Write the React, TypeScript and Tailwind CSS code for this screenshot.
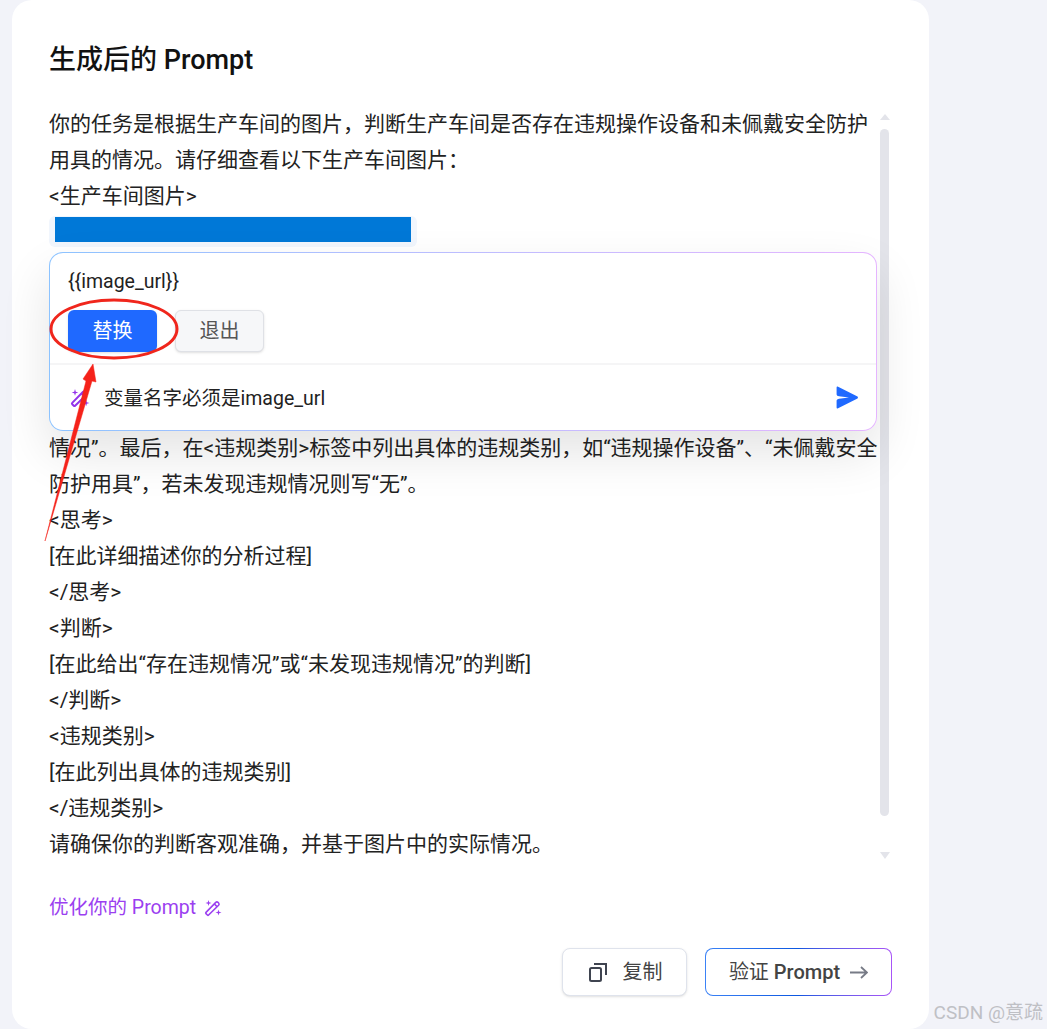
const font = "font-['Roboto','Noto_Sans_CJK_SC',sans-serif]"

const topLines = [
  '你的任务是根据生产车间的图片，判断生产车间是否存在违规操作设备和未佩戴安全防护',
  '用具的情况。请仔细查看以下生产车间图片：',
  '<生产车间图片>',
]

const bottomLines = [
  '情况”。最后，在<违规类别>标签中列出具体的违规类别，如“违规操作设备”、“未佩戴安全',
  '防护用具”，若未发现违规情况则写“无”。',
  '<思考>',
  '[在此详细描述你的分析过程]',
  '</思考>',
  '<判断>',
  '[在此给出“存在违规情况”或“未发现违规情况”的判断]',
  '</判断>',
  '<违规类别>',
  '[在此列出具体的违规类别]',
  '</违规类别>',
  '请确保你的判断客观准确，并基于图片中的实际情况。',
]

function SendIcon() {
  return (
    <svg width="22" height="23" viewBox="0 0 22 23" className="shrink-0">
      <path d="M1.6 0.6 L21.5 10.4 Q22.4 11.5 21.5 12.6 L1.6 22.4 Q0.6 22.6 0.6 21.4 L0.6 14.6 Q0.6 13 3 12.7 L13 11.5 L3 10.3 Q0.6 10 0.6 8.4 L0.6 1.6 Q0.6 0.4 1.6 0.6 Z" fill="#1f69ff" />
    </svg>
  )
}

function CopyIcon() {
  return (
    <svg width="18" height="19" viewBox="0 0 18 19" fill="none" stroke="#3f4450" strokeWidth="2" className="shrink-0">
      <rect x="1" y="5" width="11" height="13" rx="1.5" />
      <path d="M5 1 H17 V12" />
    </svg>
  )
}

function ArrowIcon() {
  return (
    <svg width="18" height="13" viewBox="0 0 18 13" fill="none" stroke="#777b86" strokeWidth="1.8" className="shrink-0">
      <path d="M0 6.5 H17 M11 1 L17 6.5 L11 12" />
    </svg>
  )
}

function WandIcon({ size, color, width }: { size: number; color: string; width: number }) {
  return (
    <svg width={size} height={size} viewBox="0 0 18 18" fill="none" stroke={color} strokeWidth={width} className="shrink-0">
      <path d="M3.4 16 L2 14.6 Q1.4 14 2 13.4 L11.8 3.4 Q12.9 2.4 14 3.4 L14.6 4 Q15.6 5.1 14.6 6.2 L4.6 16 Q4 16.6 3.4 16 Z" strokeLinejoin="round" />
      <path d="M10.4 5 L13 7.6" />
      <path d="M4.5 1 L5.2 3.3 L7.5 4 L5.2 4.7 L4.5 7 L3.8 4.7 L1.5 4 L3.8 3.3 Z" fill={color} stroke="none" />
      <path d="M14.5 10.5 L15.2 12.8 L17.5 13.5 L15.2 14.2 L14.5 16.5 L13.8 14.2 L11.5 13.5 L13.8 12.8 Z" fill={color} stroke="none" />
    </svg>
  )
}

function Annotation() {
  return (
    <svg width="1047" height="1029" viewBox="0 0 1047 1029" className="absolute left-0 top-0 z-20 pointer-events-none">
      <ellipse cx="114" cy="329" rx="63" ry="29" fill="none" stroke="#f0261c" strokeWidth="3" />
      <path d="M45 541 L86 381 L83 379 L93 364 L96 382 L92 381 Z" fill="#f5221a" stroke="#f5221a" strokeWidth="0.5" strokeLinejoin="round" />
    </svg>
  )
}

export default function App() {
  return (
    <div className={`relative h-[1029px] w-[1047px] overflow-hidden bg-[#f2f3f9] pl-3 ${font}`}>
      <div className="flex h-[1029px] w-[917px] flex-col rounded-[20px] bg-white pl-[37px] pt-[42px]">
        <h2 className="h-9 text-[27px] font-medium leading-9 text-[#111]">生成后的 Prompt</h2>

        <div className="mt-7 flex h-[756px]">
          <div className="w-[828px] text-[21px] leading-9 text-[#222] whitespace-nowrap">
            {topLines.map((line) => (
              <div key={line}>{line}</div>
            ))}
            <div className="flex h-9 items-start pt-0.5">
              <div className="h-[31px] w-[368px] rounded-md bg-[#f1f6fd] pl-1.5 pt-px">
                <div className="h-[25px] w-[356px] bg-[#0078d7]" />
              </div>
            </div>

            <div className="relative z-10 mt-0.5 -mb-px h-[179px] rounded-[14px] bg-gradient-to-r from-[#8cc3ff] to-[#e5b5ff] p-px shadow-[0_22px_50px_rgba(0,0,0,0.11)]">
              <div className="flex h-full flex-col rounded-[13px] bg-white">
                <div className="h-[112px] border-b-2 border-[#f5f5f6] pl-[18px]">
                  <div className="h-[57px] pt-[11px] text-[19.5px] leading-9">{'{{image_url}}'}</div>
                  <div className="flex gap-[18px]">
                    <button className="h-[42px] w-[89px] rounded-md bg-[#1f69ff] text-xl text-white shadow-sm">替换</button>
                    <button className="h-[42px] w-[89px] rounded-md border border-[#dfe1e6] bg-[#f6f7f9] text-xl text-[#555] shadow-sm">退出</button>
                  </div>
                </div>
                <div className="flex flex-1 items-center pl-5 pr-[18px]">
                  <WandIcon size={20} color="#9333ea" width={1.8} />
                  <span className="ml-[14px] flex-1 pt-0.5 text-[19.5px]">变量名字必须是image_url</span>
                  <SendIcon />
                </div>
              </div>
            </div>

            {bottomLines.map((line) => (
              <div key={line}>{line}</div>
            ))}
          </div>

          <div className="ml-[3px] flex w-[9px] flex-col items-center pt-2">
            <div className="h-0 w-0 border-x-[5px] border-b-[6px] border-x-transparent border-b-[#e3e4ea]" />
            <div className="mt-[9px] h-[687px] w-[9px] rounded-full bg-[#e3e4ea]" />
            <div className="mt-9 h-0 w-0 border-x-[5px] border-t-[7px] border-x-transparent border-t-[#e3e4ea]" />
          </div>
        </div>

        <div className="mt-[31px] flex h-[30px] items-center text-[19.5px] text-[#9b3ff0]">
          优化你的 Prompt
          <span className="ml-2"><WandIcon size={18} color="#9b3ff0" width={1.6} /></span>
        </div>

        <div className="mt-[25px] flex justify-end gap-[18px] pr-[37px]">
          <button className="flex h-12 w-[125px] items-center justify-center gap-4 rounded-lg border border-[#dfe3ec] bg-white pl-0.5 text-xl text-[#444] shadow-sm">
            <CopyIcon />
            复制
          </button>
          <div className="h-12 w-[187px] rounded-lg bg-gradient-to-r from-[#3b82f6] via-[#0b57e0] to-[#a855f7] p-px">
            <button className="flex h-full w-full items-center justify-center gap-2.5 rounded-[7px] bg-white text-xl text-[#444]">
              <span>验证 <span className="font-medium">Prompt</span></span>
              <ArrowIcon />
            </button>
          </div>
        </div>
      </div>

      <Annotation />
      <div className="absolute bottom-[4px] right-1 z-20 text-[19px] leading-6 text-[#bfc0c5]">CSDN @意疏</div>
    </div>
  )
}
